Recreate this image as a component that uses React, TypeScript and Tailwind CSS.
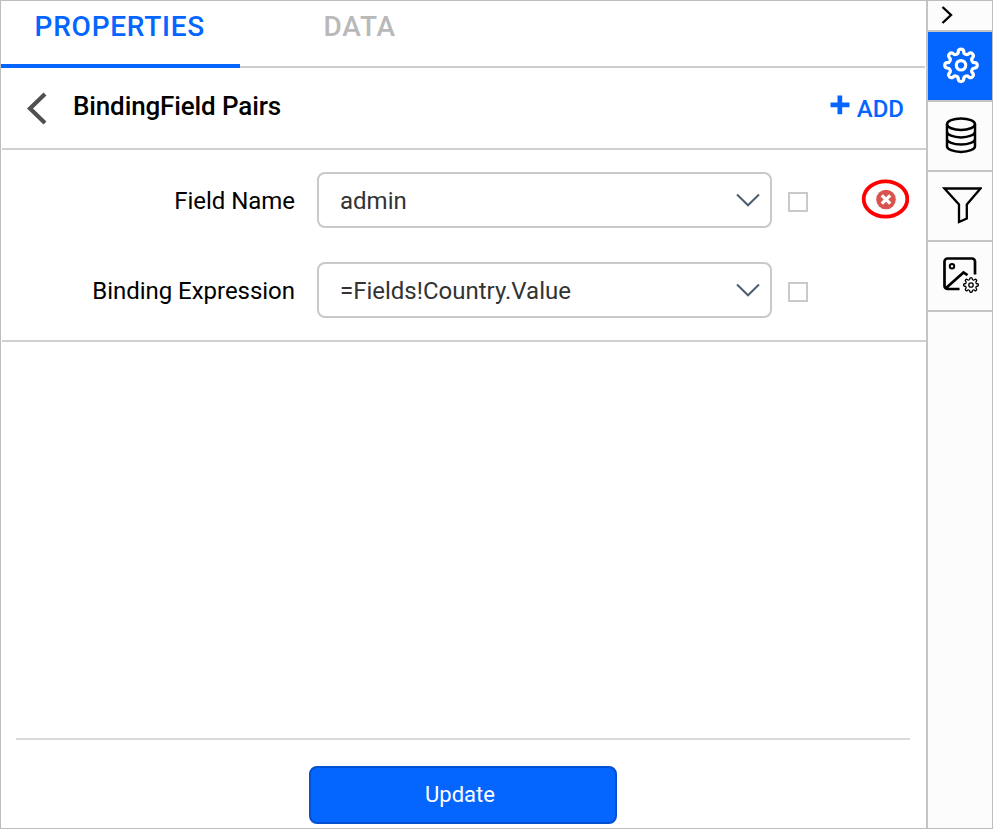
import React from "react";

function gearPath(radius: number, lobe: number, notch: number, halfAngle: number) {
  const at = (deg: number) => {
    const t = (deg * Math.PI) / 180;
    return `${(radius * Math.cos(t)).toFixed(2)} ${(radius * Math.sin(t)).toFixed(2)}`;
  };
  let d = `M${at(-halfAngle)}`;
  for (let k = 0; k < 8; k++) {
    d += `A${lobe} ${lobe} 0 0 1 ${at(k * 45 + halfAngle)}`;
    d += `A${notch} ${notch} 0 0 0 ${at((k + 1) * 45 - halfAngle)}`;
  }
  return d + "Z";
}

function Select({ value }: { value: string }) {
  return (
    <div className="flex h-14 w-[455px] items-center justify-between rounded-[8px] border-2 border-[#c9c9c9] bg-white pr-[10px] pl-[21px]">
      <span className="pt-[2px] text-[24px] leading-7 text-[#333]">{value}</span>
      <svg width="24" height="14" viewBox="0 0 24 14" fill="none" stroke="#4d5f70" strokeWidth="2">
        <path d="M1 1.5 12 12.3 23 1.5" />
      </svg>
    </div>
  );
}

function Row({ label, value, children }: { label: string; value: string; children?: React.ReactNode }) {
  return (
    <div className="flex h-14 items-center">
      <div className="w-[294px] pt-[2px] text-right text-[24px] leading-7 tracking-[-0.03px] whitespace-nowrap text-black">{label}</div>
      <div className="ml-[22px]">
        <Select value={value} />
      </div>
      <div className="mt-1 ml-4 size-5 border-2 border-[#c9c9c9]" />
      {children}
    </div>
  );
}

function SideCell({ active, children }: { active?: boolean; children: React.ReactNode }) {
  return (
    <div className={`flex h-[70px] items-center justify-center border-b-2 border-[#c4c4c4] pb-[2px] ${active ? "bg-[#0465ff]" : ""}`}>
      {children}
    </div>
  );
}

export default function App() {
  return (
    <div className="flex h-[829px] w-[993px] overflow-hidden border border-[#bdbdbd] bg-white font-['Roboto',sans-serif]">
      <main className="flex w-[925px] flex-col">
        <nav className="flex h-[67px]">
          <div className="flex w-[239px] border-b-4 border-[#0465ff] pt-[10px] pl-[33.6px] text-[28px] leading-8 font-medium tracking-[0.75px] text-[#0465ff]">
            PROPERTIES
          </div>
          <div className="mr-[1px] flex-1 border-b-2 border-[#cdcdcd] pt-[10px] pl-[83.5px] text-[28px] leading-8 font-medium tracking-[0.8px] text-[#b9b9b9]">
            DATA
          </div>
        </nav>
        <header className="ml-[1px] flex h-[82px] items-center border-b-2 border-[#d0d0d0] pl-[24px]">
          <svg width="22" height="34" viewBox="0 0 22 34" fill="none" stroke="#505050" strokeWidth="4.2" className="mb-[1px]">
            <path d="M19 3 4 17.5 19 32" />
          </svg>
          <h1 className="mb-[4px] ml-[25px] text-[26px] leading-8 font-medium tracking-[-0.13px] text-black">BindingField Pairs</h1>
          <div className="mr-[22px] ml-auto flex items-center pb-[2px] text-[#0465ff]">
            <svg width="20" height="20" viewBox="0 0 20 20" fill="#0465ff" className="-mt-[4px] mr-[7px]">
              <path d="M7.5 0.5h4.7v7H19.5v4.8H12.2v7H7.5v-7H0.5V7.5h7z" />
            </svg>
            <span className="mt-[4px] text-[24px] leading-7 font-medium">ADD</span>
          </div>
        </header>
        <section className="ml-[1px] flex h-[192px] flex-col gap-[34px] border-b-2 border-[#d0d0d0] pt-[22px]">
          <div className="-ml-[1px]">
            <Row label="Field Name" value="admin">
              <svg width="48" height="40" viewBox="0 0 48 40" className="-mt-[3px] ml-[53px]">
                <ellipse cx="24.5" cy="20" rx="21.8" ry="17.6" fill="none" stroke="#ff0000" strokeWidth="3.8" />
                <circle cx="25" cy="20.5" r="9.8" fill="#d9534f" />
                <path d="m20.8 16.3 8.4 8.4m0-8.4-8.4 8.4" stroke="#fff" strokeWidth="3.3" />
              </svg>
            </Row>
          </div>
          <div className="-ml-[1px]">
            <Row label="Binding Expression" value="=Fields!Country.Value" />
          </div>
        </section>
        <div className="flex-1" />
        <footer className="mr-[16px] ml-[15px] flex h-[90px] border-t-2 border-[#dadada] pt-[26px]">
          <button className="ml-[293px] h-[58px] w-[308px] rounded-[8px] border-2 border-[#0450d2] bg-[#0465ff] pr-[6px] pb-[2px] text-[22px] text-white">
            Update
          </button>
        </footer>
      </main>
      <aside className="flex w-[66px] flex-col border-l-2 border-[#c4c4c4] bg-[#fcfcfc]">
        <div className="h-[31px] border-b-2 border-[#c4c4c4] pt-[5px] pl-[13px]">
          <svg width="12" height="18" viewBox="0 0 12 18" fill="none" stroke="#000" strokeWidth="2.4">
            <path d="m1.5 1 8.5 8-8.5 8" />
          </svg>
        </div>
        <SideCell active>
          <svg width="40" height="40" viewBox="-21 -20.3 40 40" fill="none" stroke="#fff" strokeWidth="3.2">
            <path d={gearPath(14.4, 2.85, 2.95, 11)} />
            <circle r="4.7" />
          </svg>
        </SideCell>
        <SideCell>
          <svg width="32" height="38" viewBox="0 0 32 38" fill="none" stroke="#000" strokeWidth="2.5" className="ml-[2px]">
            <ellipse cx="16" cy="8.2" rx="14" ry="5.7" />
            <path d="M2 8.2v22c0 3.1 6.3 5.7 14 5.7s14-2.6 14-5.7v-22M2 15.7c0 3.1 6.3 5.7 14 5.7s14-2.6 14-5.7M2 22.9c0 3.1 6.3 5.7 14 5.7s14-2.6 14-5.7" />
          </svg>
        </SideCell>
        <SideCell>
          <svg width="40" height="38" viewBox="0 0 40 38" fill="none" stroke="#000" strokeWidth="2.3" className="ml-[4px]">
            <path d="M2.5 2.5h36L24.8 18.5V32.5L17 36V18.5z" />
          </svg>
        </SideCell>
        <SideCell>
          <svg width="40" height="40" viewBox="0 0 40 40" fill="none" stroke="#000" strokeWidth="2.7" className="ml-[2px]">
            <path d="M18.5 34H6.5a3 3 0 0 1-3-3V6.5a3 3 0 0 1 3-3H31a3 3 0 0 1 3 3V19.5M4.5 33.5 22.5 17.5l4 2.7" />
            <circle cx="11" cy="11.3" r="2.2" strokeWidth="2" />
            <g transform="translate(30 30)" strokeWidth="1.3">
              <path d={gearPath(6.5, 1.25, 1.35, 11)} />
              <circle r="2.2" />
            </g>
          </svg>
        </SideCell>
      </aside>
    </div>
  );
}
